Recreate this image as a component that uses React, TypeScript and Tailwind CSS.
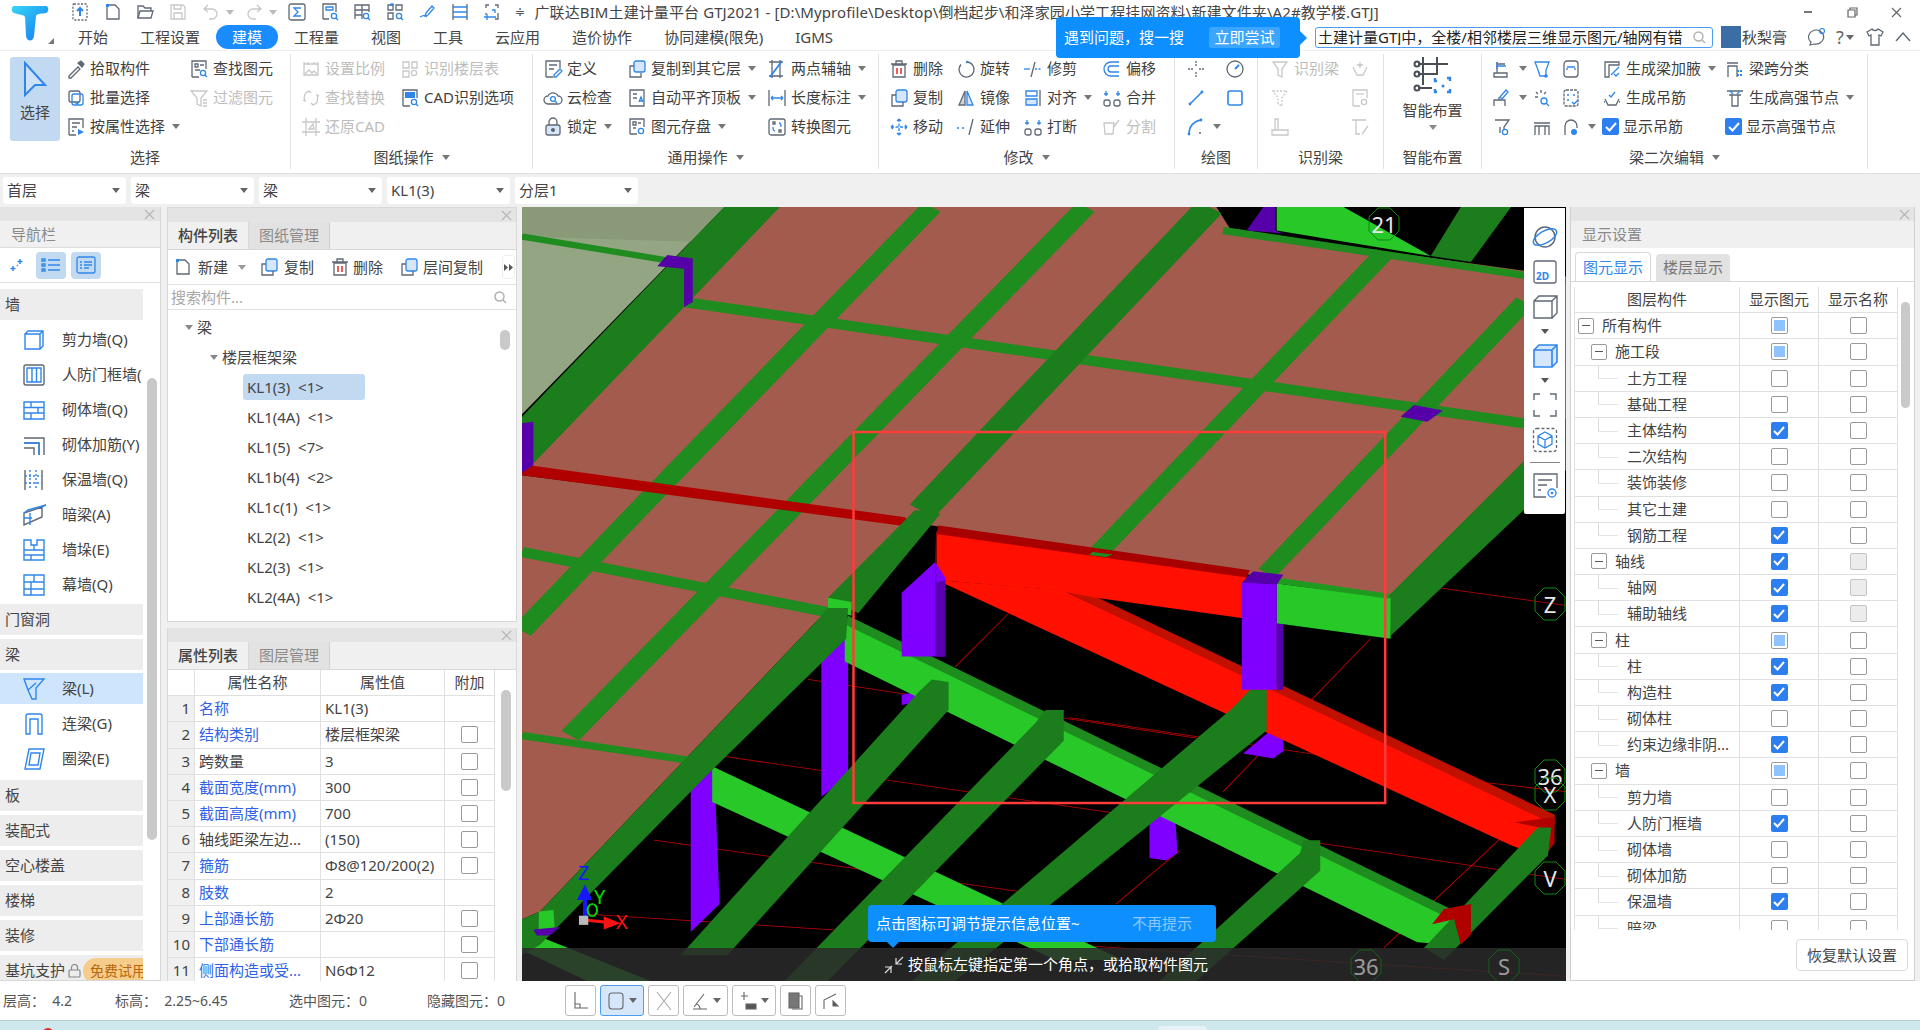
import React from "react";

const G = "#5f6875";
const B = "#2f86ea";
const L = "#c8c8c8";

const Ic = ({ s = 20, c = G, children }: { s?: number; c?: string; children: React.ReactNode }) => (
  <svg width={s} height={s} viewBox="0 0 20 20" fill="none" stroke={c} strokeWidth={1.3} className="shrink-0">
    {children}
  </svg>
);

const Caret = ({ c = "#777" }: { c?: string }) => (
  <svg width="8" height="5" viewBox="0 0 8 5" className="shrink-0">
    <path d="M0 0h8L4 5z" fill={c} />
  </svg>
);

const X = () => (
  <svg width="11" height="11" viewBox="0 0 11 11" stroke="#b5b5b5" strokeWidth="1.2">
    <path d="M1 1l9 9M10 1l-9 9" />
  </svg>
);

// ribbon and quick access icons
const icons: Record<string, React.ReactNode> = {
  upload: <><rect x="3" y="2" width="14" height="16" rx="1" strokeDasharray="2 1.5" /><path d="M10 14V6M7 9l3-3 3 3" stroke={B} strokeWidth="2" /></>,
  newfile: <><path d="M4 3h8l4 4v10H4z" /><path d="M3 2h3v3H3z" fill={B} stroke="none" /></>,
  folder: <><path d="M3 16V4h5l2 2h6v3" /><path d="M3 16l2-7h13l-2 7z" /></>,
  save: <><path d="M3 3h12l2 2v12H3z" /><path d="M6 3v4h7V3M6 17v-6h8v6" /></>,
  undo: <path d="M7 3L3 7l4 3M3 7h8a5 5 0 0 1 0 10H8" />,
  redo: <path d="M13 3l4 4-4 3M17 7H9a5 5 0 0 0 0 10h3" />,
  sigma: <><rect x="2" y="2" width="16" height="16" rx="2" /><path d="M14 6H7l4 4-4 4h7" stroke={B} /></>,
  docq: <><path d="M3 17V2h13v8M3 17h6" /><path d="M6 5h7v3H6z" stroke={B} /><circle cx="14" cy="14" r="2.6" stroke={B} /><path d="M16 16l2 2" stroke={B} /></>,
  gridq: <><path d="M3 17V3h14v7M3 8h14M3 13h7M10 3v14" /><circle cx="14" cy="14" r="2.6" stroke={B} /><path d="M16 16l2 2" stroke={B} /></>,
  gridq2: <><path d="M3 3h5v5H3zM11 3h6v5h-6zM3 11h5v6H3z" /><circle cx="14" cy="14" r="2.6" stroke={B} /><path d="M16 16l2 2M7 1v3M5 2.5h4" stroke={B} /></>,
  pen: <><path d="M3 15c3-2 5-2 7 0M9 11l6-7 2 2-6 7-3 1z" stroke={B} /></>,
  columns: <><path d="M3 2v16M17 2v16" /><path d="M3 5h14M3 10h14M3 15h14" stroke={B} /></>,
  plusdoc: <><path d="M4 6V3h3M13 3h3v3M16 11v6h-3M4 11v2" /><path d="M8 15h6M5 12v6M2 15h6" stroke={B} /><path d="M10 8h3v3" stroke={B} /></>,
  pick: <><path d="M3 17l9-9 2 2-9 9H3z" /><path d="M12 4l4 4 2-3-3-3z" fill={G} /></>,
  batch: <><rect x="3" y="3" width="11" height="11" rx="2" /><rect x="6" y="6" width="11" height="11" rx="2" stroke={B} /><path d="M9 14l2 2 3-3" stroke={B} /></>,
  attr: <><path d="M3 18V2h14v9M3 18h7M6 6h8M6 10h5M6 14h2" /><path d="M12 12l6 3-6 3z" fill={B} stroke="none" /></>,
  find: <><path d="M3 18V2h14v8M3 18h7" /><path d="M6 5h3v3H6zM11 6h4M6 11h5" /><circle cx="14" cy="14" r="2.6" stroke={B} /><path d="M16 16l2 2" stroke={B} /></>,
  filter: <><path d="M2 3h16l-6 7v8l-4-2v-6z" /><path d="M14 12h4M14 15h4M14 18h4" /></>,
  scale: <><path d="M3 5h14v11H3zM3 5V3M17 5V3M7 3v2M13 3v2" /><path d="M4 15l4-4 3 3 2-2 3 3" /></>,
  floor: <><path d="M3 3h6v6H3zM12 3h5v6h-5zM3 12h6v6H3z" /><circle cx="14" cy="14" r="2.6" /></>,
  replace: <path d="M8 3C4 4 2 8 4 13l-2-1M12 17c4-1 6-5 4-10l2 1M8 3l2 2M12 17l-2-2" />,
  cad: <><path d="M3 18V2h14v8M3 18h7" /><rect x="5" y="4" width="10" height="6" fill={B} stroke="none" /><circle cx="14" cy="14" r="2.6" stroke={B} /><path d="M16 16l2 2" stroke={B} /></>,
  restore: <path d="M5 1v18M15 1v18M1 5h18M1 15h18M8 12l4-5 1 5z" />,
  define: <><path d="M3 18V2h14v7M3 18h7M6 6h8M6 10h5" /><path d="M11 16l6-6 2 2-6 6h-2z" stroke={B} /></>,
  cloud: <><path d="M5 16a4 4 0 0 1 0-8 5.5 5.5 0 0 1 10 0 4 4 0 0 1 0 8z" /><circle cx="10" cy="11" r="2.4" stroke={B} /><path d="M12 13l2 2" stroke={B} /></>,
  lock: <><rect x="3" y="8" width="14" height="10" rx="2" fill="#d7e7fb" stroke={G} /><path d="M6 8V5a4 4 0 0 1 8 0v3" /><circle cx="10" cy="13" r="1.4" fill={G} /></>,
  copyto: <><rect x="7" y="2" width="11" height="11" rx="2" stroke={B} fill="#d7e7fb" /><path d="M7 7H3v11h11v-4" /></>,
  align: <><path d="M3 2h14v16H3zM6 6h4M6 10h4" /><path d="M12 14l2-5 2 5M13 13h2" stroke={B} /></>,
  store: <><path d="M3 17V2h14v8M3 17h7M6 5h3v3H6zM11 6h3M6 11h3" /><circle cx="14" cy="14" r="2.6" stroke={B} /></>,
  axis: <><path d="M2 3h14M2 17h14M5 1v18M13 1v18" /><path d="M3 18L15 2" stroke={B} strokeWidth="1.8" /></>,
  dim: <><path d="M2 2v16M18 2v16" /><path d="M4 10h12M4 10l2-2M4 10l2 2M16 10l-2-2M16 10l-2 2" stroke={B} /></>,
  convert: <><rect x="2" y="2" width="16" height="16" rx="2" /><path d="M6 5h2v2H6zM12 13h2v2h-2z" /><path d="M12 6c2 0 2 2 2 4M8 14c-2 0-2-2-2-4" stroke={B} /></>,
  del: <><path d="M4 6h12v12H4zM2 5h16M7 5V2h6v3" /><path d="M8 9v6M12 9v6" stroke="#e33" strokeWidth="1.6" /></>,
  copy: <><rect x="7" y="2" width="11" height="12" rx="2" fill="#d7e7fb" stroke={B} /><path d="M7 7H3v11h11v-4" /></>,
  move: <path d="M10 2v16M2 10h16M10 2L8 4M10 2l2 2M10 18l-2-2M10 18l2-2M2 10l2-2M2 10l2 2M18 10l-2-2M18 10l-2 2" stroke={B} strokeDasharray="3 1.5" />,
  rotate: <><path d="M11 3a7.5 7.5 0 1 1-6 2.5" /><circle cx="11" cy="3" r="1.2" fill={B} stroke="none" /></>,
  mirror: <><path d="M9 3L3 17h6z" fill="#cfd4da" /><path d="M11 3l6 14h-6z" fill="#d7e7fb" stroke={B} /></>,
  extend: <><path d="M1 11h3M6 11h3" strokeDasharray="2 1" stroke={B} /><path d="M17 2l-4 16" /></>,
  trim: <><path d="M1 10h6" stroke={B} /><path d="M12 3l-4 15" /><path d="M12 10h6" stroke={B} strokeDasharray="2 1.5" /></>,
  alignv: <><path d="M3 3h11v5H3z" stroke={B} /><path d="M3 11h11v6H3z" fill="#d7e7fb" stroke={B} /><path d="M17 2v16" /></>,
  offset: <path d="M17 3H9a7 7 0 0 0 0 14h8M17 7H9a3 3 0 0 0 0 6h8" stroke={B} />,
  merge: <><rect x="2" y="12" width="6" height="6" rx="2" /><rect x="12" y="12" width="6" height="6" rx="2" /><path d="M4 3v5M16 3v5M2 6h4M14 6h4" stroke={B} /></>,
  split: <><path d="M2 6h10l-1 11H3zM17 3l-6 8" /></>,
  cross: <path d="M10 2v5M10 13v5M2 10h5M13 10h5" strokeDasharray="2 1" />,
  gauge: <><circle cx="10" cy="10" r="8" /><path d="M10 10l4-4" stroke={B} strokeWidth="2" /></>,
  line: <><path d="M4 16L16 4" stroke={B} strokeWidth="1.6" /><circle cx="4" cy="16" r="1.4" fill={B} stroke="none" /><circle cx="16" cy="4" r="1.4" fill={B} stroke="none" /></>,
  square: <rect x="3" y="3" width="14" height="14" rx="2" stroke={B} strokeWidth="1.6" />,
  arc: <><path d="M3 17C3 9 8 4 15 3" stroke={B} strokeWidth="1.6" /><circle cx="3" cy="17" r="1.4" fill={B} stroke="none" /><circle cx="15" cy="3" r="1.4" fill={B} stroke="none" /><circle cx="14" cy="16" r="1" fill={G} stroke="none" /></>,
  funnel: <><path d="M3 3h14l-5 7v8l-4-2v-6z" /></>,
  funnel2: <><path d="M3 3h14l-5 7v8l-4-2v-6z" strokeDasharray="2 1.5" /></>,
  slab: <><path d="M5 2h3v11H5zM2 13h16v5H2z" /></>,
  hang: <><path d="M3 8l4 8h6l4-8M10 3v6M7 6h6" /></>,
  doc2: <><path d="M3 18V2h14v8M3 18h7" /><path d="M6 6h8" /><circle cx="14" cy="14" r="2.6" /></>,
  tt: <><path d="M2 3h14M6 3v14h4M12 17l6-8" /></>,
  beamL: <><path d="M2 14h13v4H2zM5 14V6M5 3v6M5 5h8" stroke={G} /><path d="M5 3v7M5 7h9" stroke={B} /></>,
  beamF: <><path d="M3 3h14l-3 8v6H8l-2-6z" stroke={B} /><circle cx="14" cy="17" r="1.8" fill={B} stroke="none" /></>,
  box2: <><rect x="3" y="2" width="14" height="16" rx="3" /><path d="M6 8h8M6 11V9M14 11V9" stroke={B} /></>,
  penBeam: <><path d="M2 18v-6h11v6M7 12V9" /><path d="M8 9l6-7 2 2-6 7z" stroke={B} /></>,
  sparkq: <><path d="M3 9h3M9 2v3M4 4l2 2M14 4l-2 2" stroke={G} /><circle cx="12" cy="13" r="3" stroke={B} /><path d="M14 15l3 3" stroke={B} /></>,
  dots: <><rect x="3" y="2" width="14" height="16" rx="2" strokeDasharray="3 1" /><circle cx="7" cy="7" r="1" fill={B} stroke="none" /><circle cx="13" cy="7" r="1" fill={B} stroke="none" /><circle cx="7" cy="12" r="1" fill={B} stroke="none" /><path d="M11 14l2 2 4-4" stroke={B} /></>,
  funq: <><path d="M3 3h14l-5 7v2M8 16v-6" /><circle cx="13" cy="15" r="2.6" stroke={B} /></>,
  span: <><path d="M2 6h16M3 18V9h14v9M7 9v9M13 9v9" /></>,
  arch: <><path d="M4 18V9a6 6 0 0 1 12 0v2" /><circle cx="13" cy="15" r="3" fill={B} stroke="none" /></>,
  haunch: <><path d="M3 18V3h14v3H7v12z" /><path d="M9 16l8-8" stroke={B} /><path d="M12 15l2 2 3-3" stroke={B} /></>,
  genhang: <><path d="M3 11l3 6h8l3-6" /><path d="M7 7l2 2 4-5" stroke={B} /><path d="M2 14h3M15 14h3" strokeDasharray="1 1" /></>,
  spanq: <><path d="M2 4h11M3 18V7h9v11" /><path d="M12 11h2v2h-2zM15 11h2v2h-2zM12 15h2v2h-2zM15 15h2v2h-2z" fill={B} stroke="none" /></>,
  node: <><path d="M2 3h16M4 7h12M7 7v11h6V7" /><path d="M5 3l3 3M15 3l-3 3" stroke={B} /></>,
};

const Icon = ({ n, c }: { n: string; c?: string }) => <Ic c={c}>{icons[n]}</Ic>;

type It = { icon?: string; t?: string; caret?: boolean; off?: boolean; checked?: boolean };

const Item = ({ icon, t, caret, off, checked }: It) => (
  <div className={`flex h-[29px] items-center ${off ? "text-[#bdbdbd]" : "text-[#3f3f3f]"}`}>
    {checked && <Check on />}
    {icon && <Icon n={icon} c={off ? L : undefined} />}
    {t && <span className="ml-[4px] whitespace-nowrap">{t}</span>}
    {caret && <span className="ml-[7px]"><Caret /></span>}
  </div>
);

const Col = ({ w, items }: { w: string; items: It[] }) => (
  <div className={`flex shrink-0 flex-col ${w}`}>
    {items.map((it, i) => (
      <Item key={i} {...it} />
    ))}
  </div>
);

const Group = ({ w, pl, label, caret, children }: { w: string; pl: string; label: string; caret?: boolean; children: React.ReactNode }) => (
  <div className={`mt-[3px] flex h-[115px] shrink-0 flex-col border-r border-[#e2e2e2] ${w}`}>
    <div className={`flex h-[87px] ${pl}`}>{children}</div>
    <div className="mt-[5px] flex h-[24px] items-center justify-center gap-[8px] text-[#444]">
      {label}
      {caret && <Caret />}
    </div>
  </div>
);

// the 3d model view, coordinates follow the picture of the model
const Scene = () => {
  const dark = "#1b7d1b";
  const mid = "#1e8c1e";
  const light = "#28c828";
  const purple = "#8000ff";
  const purpleD = "#5500a8";
  const reds = [
    [430, 930, 1010, 1045], [820, 1005, 1230, 1085], [300, 1080, 920, 1198], [920, 1198, 1562, 1322],
    [200, 1245, 780, 1352], [100, 1390, 1562, 1512], [1370, 750, 1562, 785], [730, 800, 650, 905],
    [1270, 850, 1050, 1150], [1490, 1210, 1290, 1456], [985, 1265, 890, 1370], [1290, 1110, 1562, 1150],
  ];
  const thin = [
    [615, 4, 210, 552, 32], [845, 4, 410, 590, 32], [1290, 95, 865, 680, 30], [1500, 190, 1115, 722, 30],
    [245, 190, 1562, 440, 20], [1050, 50, 1562, 150, 14], [210, 552, 3, 835, 32], [410, 590, 75, 1040, 32],
    [3, 680, 485, 805, 20], [3, 1040, 260, 1090, 14], [3, 62, 250, 115, 12],
  ];
  return (
    <svg viewBox="3 4 1559 1517" preserveAspectRatio="none" className="absolute inset-0 h-full w-full">
      <rect x="0" y="0" width="1568" height="1568" fill="#000" />
      {reds.map((l, i) => (
        <line key={i} x1={l[0]} y1={l[1]} x2={l[2]} y2={l[3]} stroke="#c80000" strokeWidth="1.5" />
      ))}
      <polygon points="450,880 490,830 490,1120 450,1160" fill={purple} />
      <polygon points="255,1140 290,1100 298,1370 255,1425" fill={purple} />
      <polygon points="570,960 590,955 590,975 570,980" fill={purple} />
      <polygon points="1130,950 1140,940 1140,1070 1125,1085 1080,1075 1130,1020" fill={purple} />
      <polygon points="940,1210 965,1180 965,1135 975,1135 982,1270 965,1285 940,1280" fill={purple} />
      <polygon points="942,1128 985,1120 975,1140 950,1135" fill={purpleD} />
      {/* red beam running down to the right */}
      <polygon points="622,735 810,755 1545,1210 1530,1280 1480,1255" fill="#ff1000" />
      <polygon points="810,755 860,768 1545,1195 1545,1215" fill="#c01000" />
      <polygon points="622,640 1085,725 1080,810 860,770 800,755 622,735" fill="#ff1000" />
      <polygon points="1485,1210 1545,1200 1545,1250 1530,1278 1530,1222" fill="#b00000" />
      {/* long light beams */}
      <polygon points="485,815 1390,1395 1390,1450 1340,1445 485,895" fill={light} />
      <polygon points="490,805 1390,1380 1390,1400 485,822" fill={mid} />
      <polygon points="287,1100 900,1480 800,1480 287,1170" fill={light} />
      <polygon points="3,1420 195,1521 100,1521 3,1460" fill={light} />
      {/* cross beams */}
      <polygon points="615,930 640,935 640,990 310,1470 240,1470 595,955" fill={dark} />
      <polygon points="785,990 812,990 812,1050 460,1521 395,1521 770,1015" fill={dark} />
      <polygon points="1090,950 1115,950 1115,1030 650,1521 585,1521 1065,985" fill={dark} />
      <polygon points="1170,1245 1195,1245 1195,1305 1010,1521 955,1521 1165,1270" fill={dark} />
      <polygon points="1520,1220 1540,1220 1535,1275 1380,1480 1350,1456" fill={dark} />
      <polygon points="1380,1380 1420,1370 1420,1430 1405,1450 1395,1400 1362,1410" fill="#b00000" />
      <polygon points="570,760 620,700 635,730 635,885 570,885" fill={purple} />
      <polygon points="620,640 622,740 635,735 635,885 620,885" fill="#5a00b0" />
      <polygon points="1130,730 1140,735 1140,950 1130,950" fill={purpleD} />
      {/* slabs */}
      <polygon points="3,4 305,4 3,410" fill="#93a583" />
      <polygon points="3,4 305,4 255,72 3,62" fill="#8a9a78" />
      <polygon points="385,4 1040,4 1062,50 1562,140 1562,420 1300,768 625,630 3,510" fill="#a25b4c" />
      <polygon points="3,530 575,625 470,780 440,820 30,1385 3,1400" fill="#a25b4c" />
      <polygon points="1130,50 1130,4 1230,4 1360,100" fill={light} />
      <polygon points="1405,4 1480,4 1420,112 1360,100" fill={dark} />
      <polygon points="305,4 388,4 245,200 3,530 3,415" fill={dark} />
      {thin.map((l, i) => (
        <line key={i} x1={l[0]} y1={l[1]} x2={l[2]} y2={l[3]} stroke={mid} strokeWidth={l[4]} />
      ))}
      <line x1="1030" y1="4" x2="600" y2="600" stroke={dark} strokeWidth="44" />
      <polygon points="3,508 575,612 590,632 3,530" fill="#b00000" />
      <polygon points="625,628 1090,716 1085,730 622,645" fill="#a80000" />
      <polygon points="855,680 885,685 875,690 850,686" fill={mid} />
      <polygon points="590,598 628,605 505,800 460,770" fill={dark} />
      <polygon points="460,770 495,778 495,805 460,792" fill={light} />
      <polygon points="460,790 490,790 487,850 285,1110 30,1450 3,1470 3,1400 30,1385 440,820" fill={dark} />
      <polygon points="1298,765 1562,420 1562,520 1300,845" fill={dark} />
      <polygon points="1130,742 1300,770 1300,850 1130,820" fill={light} />
      <polygon points="1130,730 1298,762 1298,772 1130,742" fill="#1f9a1f" />
      <polygon points="1078,740 1130,742 1130,950 1078,950" fill={purple} />
      <polygon points="1078,740 1095,718 1140,725 1130,744" fill={purpleD} />
      <polygon points="1315,415 1335,392 1378,403 1355,425" fill={purpleD} />
      <polygon points="205,120 220,98 258,105 258,190 245,200 245,125" fill={purpleD} />
      <polygon points="3,428 20,425 20,510 3,525" fill={purpleD} />
      <polygon points="1085,50 1110,4 1128,4 1128,50 1140,56" fill={purpleD} />
      {/* axis marks */}
      <polygon points="28,1385 50,1382 52,1420 28,1422" fill={light} />
      <polygon points="20,1420 60,1415 45,1432 25,1432" fill={purpleD} />
      <line x1="97" y1="1350" x2="97" y2="1395" stroke="#1717ff" strokeWidth="6" />
      <polygon points="85,1362 108,1362 97,1332" fill="#1717ff" />
      <ellipse cx="108" cy="1382" rx="7" ry="12" fill="none" stroke="#00e000" strokeWidth="3" />
      <line x1="100" y1="1402" x2="130" y2="1406" stroke="#f11" strokeWidth="6" />
      <polygon points="125,1394 150,1408 125,1420" fill="#f11" />
      <rect x="88" y="1393" width="14" height="18" fill="#bbb" />
      <rect x="498" y="445" width="794" height="727" fill="none" stroke="#ff3b3b" strokeWidth="2.5" vectorEffect="non-scaling-stroke" />
    </svg>
  );
};

const Tag = ({ pos, t, dim }: { pos: string; t: string; dim?: boolean }) => (
  <div className={`absolute flex h-[34px] w-[32px] items-center justify-center ${pos} ${dim ? "opacity-60" : ""}`}>
    <svg viewBox="0 0 32 34" className="absolute inset-0" fill="none" stroke="#0c8a0c" strokeWidth="1">
      <path d="M10 1h12l9 9v14l-9 9H10l-9-9V10z" />
    </svg>
    <span className="relative text-[22px] leading-none text-[#e8e8e8]">{t}</span>
  </div>
);

const Check = ({ on, part, off }: { on?: boolean; part?: boolean; off?: boolean }) => {
  if (on)
    return (
      <span className="flex h-[17px] w-[17px] shrink-0 items-center justify-center rounded-[2px] bg-[#2d7ff0]">
        <svg width="12" height="10" viewBox="0 0 12 10" fill="none" stroke="#fff" strokeWidth="2">
          <path d="M1 5l3.5 3.5L11 1" />
        </svg>
      </span>
    );
  if (part)
    return (
      <span className="flex h-[17px] w-[17px] shrink-0 items-center justify-center rounded-[2px] border border-[#9a9a9a] bg-white">
        <span className="h-[11px] w-[11px] bg-[#8fc3ff]" />
      </span>
    );
  return <span className={`h-[17px] w-[17px] shrink-0 rounded-[2px] border ${off ? "border-[#c4c4c4] bg-[#ececec]" : "border-[#9a9a9a] bg-white"}`} />;
};

const navIcons: Record<string, React.ReactNode> = {
  剪力墙: <><path d="M3 6h15v15H3zM3 6l3-3h15v15l-3 3M18 6l3-3" /></>,
  人防门框墙: <><rect x="2" y="2" width="20" height="20" rx="2" stroke={G} /><path d="M5 5h14v14H5zM10 5v14M14.500 5v14" /></>,
  砌体墙: <path d="M2 4h20v17H2zM2 9.500h20M2 15h20M9 4v5.500M16 9.500V15M9 15v6" />,
  砌体加筋: <><path d="M2 5h20v17M2 10h15v12M2 15h10v7" stroke={G} /><path d="M2 10h15v12" /></>,
  保温墙: <><path d="M3 2v20M20 2v20" stroke={G} /><path d="M8 2v20M14 2v20M3 8h17M3 15h17" strokeDasharray="2 2" /></>,
  暗梁: <><path d="M2 10l18-6v10L2 22z" stroke={G} /><path d="M2 10l4-3 18-5-4 2M2 15h8M8 10v12" /></>,
  墙垛: <path d="M2 2h7v5h6V2h7v20H2zM2 12h20M2 17h20M12 7v5M9 17v5" />,
  幕墙: <path d="M2 2h20v20H2zM2 9h20M2 16h20M12 2v7M9 9v13" />,
  梁: <path d="M2 2h20l-8 9v11h-4l-4-9zM6 13l8-7" />,
  连梁: <path d="M4 22V4a2 2 0 0 1 2-2h12a2 2 0 0 1 2 2v18h-4V7H8v15z" />,
  圈梁: <path d="M7 2h15l-4 20H3zM9 6h9l-2 12H7z" />,
};

const NavHead = ({ t, mt = "mt-[4px]", children }: { t: string; mt?: string; children?: React.ReactNode }) => (
  <div className={`${mt} flex h-[31px] w-[143px] shrink-0 items-center overflow-hidden bg-[#ededed] pl-[5px] text-[#444]`}>
    <span className="shrink-0 whitespace-nowrap">{t}</span>
    {children}
  </div>
);

const NavRow = ({ k, t, on }: { k: string; t: string; on?: boolean }) => (
  <div className="flex h-[35px] w-[143px] shrink-0 items-center">
    <div className={`flex h-[31px] w-full items-center overflow-hidden pl-[22px] ${on ? "bg-[#cfe5fd]" : ""}`}>
      <svg width="24" height="24" viewBox="0 0 24 24" fill="none" stroke={B} strokeWidth="1.4" className="shrink-0">
        {navIcons[k]}
      </svg>
      <span className="ml-[16px] whitespace-nowrap text-[#444]">{t}</span>
    </div>
  </div>
);

const Nav = () => (
  <div className="relative flex h-full w-[161px] shrink-0 flex-col overflow-hidden border-r border-b border-[#d8d8d8] bg-white">
    <div className="flex h-[14px] shrink-0 items-center justify-end bg-[#e4e4e4] pr-[5px]"><X /></div>
    <div className="flex h-[27px] shrink-0 items-center border-b border-[#dcdcdc] bg-[#f0f0f0] pl-[11px] text-[#8a8a8a]">导航栏</div>
    <div className="flex h-[35px] shrink-0 items-center gap-[5px] border-b border-[#e2e2e2] pl-[9px]">
      <svg width="16" height="16" viewBox="0 0 16 16" fill="none" stroke={B} strokeWidth="1.4" className="mr-[6px] shrink-0">
        <path d="M11 2v5M8.500 4.500h5M4 9v5M1.500 11.500h5M9 8l-1 1" />
      </svg>
      <div className="flex h-[27px] w-[30px] items-center justify-center rounded-[4px] bg-[#c2d9f2]">
        <svg width="20" height="16" viewBox="0 0 20 16" fill="none" stroke={B} strokeWidth="1.3">
          <path d="M1 2h3v2H1zM1 7h3v2H1zM1 12h3v2H1zM7 3h12M7 8h12M7 13h12" />
        </svg>
      </div>
      <div className="flex h-[27px] w-[30px] items-center justify-center rounded-[4px] bg-[#c2d9f2]">
        <svg width="20" height="18" viewBox="0 0 20 18" fill="none" stroke={B} strokeWidth="1.3">
          <rect x="1" y="1" width="18" height="16" rx="2" />
          <path d="M4 6h2M8 6h8M4 9h2M8 9h8M4 12h2M8 12h5" />
        </svg>
      </div>
    </div>
    <div className="flex flex-col">
      <div className="h-[2px]" />
      <NavHead t="墙" />
      <div className="h-[2px]" />
      <NavRow k="剪力墙" t="剪力墙(Q)" />
      <NavRow k="人防门框墙" t="人防门框墙(" />
      <NavRow k="砌体墙" t="砌体墙(Q)" />
      <NavRow k="砌体加筋" t="砌体加筋(Y)" />
      <NavRow k="保温墙" t="保温墙(Q)" />
      <NavRow k="暗梁" t="暗梁(A)" />
      <NavRow k="墙垛" t="墙垛(E)" />
      <NavRow k="幕墙" t="幕墙(Q)" />
      <NavHead t="门窗洞" mt="mt-[2px]" />
      <NavHead t="梁" />
      <div className="h-[1px]" />
      <NavRow k="梁" t="梁(L)" on />
      <NavRow k="连梁" t="连梁(G)" />
      <NavRow k="圈梁" t="圈梁(E)" />
      <NavHead t="板" />
      <NavHead t="装配式" />
      <NavHead t="空心楼盖" />
      <NavHead t="楼梯" />
      <NavHead t="装修" />
      <NavHead t="基坑支护">
        <svg width="13" height="14" viewBox="0 0 13 14" fill="none" stroke="#888" strokeWidth="1.2" className="ml-[3px] shrink-0">
          <rect x="1" y="6" width="11" height="7" rx="1" />
          <path d="M3.500 6V3.500a3 3 0 0 1 6 0V6" />
        </svg>
        <span className="ml-[2px] flex h-[26px] shrink-0 items-center whitespace-nowrap rounded-l-full bg-[#f6cc8a] pl-[7px] pr-[4px] text-[14px] text-[#b4670f]">免费试用</span>
      </NavHead>
    </div>
    <div className="absolute left-[147px] top-[171px] h-[462px] w-[10px] rounded-full bg-[#c9c9c9]" />
  </div>
);

const PanelTabs = ({ a, b }: { a: string; b: string }) => (
  <>
    <div className="flex h-[14px] shrink-0 items-center justify-end bg-[#e4e4e4] pr-[4px]"><X /></div>
    <div className="flex h-[28px] shrink-0 border-b border-[#d8d8d8] bg-[#f0f0f0]">
      <div className="flex w-[81px] items-center justify-center border-r border-[#d8d8d8] font-medium text-[#444]">{a}</div>
      <div className="flex w-[81px] items-center justify-center border-r border-[#d0d0d0] bg-[#e2e2e2] text-[#8a8a8a]">{b}</div>
    </div>
  </>
);

const kl = ["KL1(3)  <1>", "KL1(4A)  <1>", "KL1(5)  <7>", "KL1b(4)  <2>", "KL1c(1)  <1>", "KL2(2)  <1>", "KL2(3)  <1>", "KL2(4A)  <1>"];

const ListPanel = () => (
  <div className="flex h-[415px] shrink-0 flex-col overflow-hidden border border-[#d8d8d8] bg-white">
    <PanelTabs a="构件列表" b="图纸管理" />
    <div className="flex h-[35px] shrink-0 items-center border-b border-[#e2e2e2] pl-[5px] text-[#444]">
      <Icon n="newfile" />
      <span className="ml-[5px]">新建</span>
      <span className="ml-[10px] mr-[13px]"><Caret c="#999" /></span>
      <Icon n="copy" />
      <span className="ml-[5px]">复制</span>
      <span className="ml-[16px]"><Icon n="del" /></span>
      <span className="ml-[3px]">删除</span>
      <span className="ml-[16px]"><Icon n="copy" /></span>
      <span className="ml-[4px]">层间复制</span>
      <span className="ml-[19px] flex h-[24px] w-[13px] items-center justify-center rounded-[3px] border border-[#eee]">
        <svg width="9" height="7" viewBox="0 0 9 7" fill="#555"><path d="M0 0l4 3.500L0 7zM5 0l4 3.500L5 7z" /></svg>
      </span>
    </div>
    <div className="flex h-[25px] shrink-0 items-center justify-between border-b border-[#e2e2e2] pl-[3px] pr-[9px] text-[#a8a8a8]">
      搜索构件...
      <svg width="13" height="13" viewBox="0 0 13 13" fill="none" stroke="#b0b0b0" strokeWidth="1.5">
        <circle cx="5.500" cy="5.500" r="4.500" />
        <path d="M9 9l3 3" />
      </svg>
    </div>
    <div className="relative flex-1 pt-[2px] text-[#444]">
      <div className="flex h-[30px] items-center pl-[17px]"><Caret c="#888" /><span className="ml-[4px]">梁</span></div>
      <div className="flex h-[30px] items-center pl-[42px]"><Caret c="#888" /><span className="ml-[4px]">楼层框架梁</span></div>
      {kl.map((k, i) => (
        <div key={k} className="flex h-[30px] items-center pl-[75px]">
          <span className={`flex h-[26px] items-center whitespace-pre rounded-[3px] pl-[4px] ${i === 0 ? "w-[122px] bg-[#c2d9f2]" : ""}`}>{k}</span>
        </div>
      ))}
      <div className="absolute left-[332px] top-[20px] h-[20px] w-[10px] rounded-full bg-[#c9c9c9]" />
    </div>
  </div>
);

const props = [
  ["名称", "KL1(3)", 1, 0],
  ["结构类别", "楼层框架梁", 1, 1],
  ["跨数量", "3", 0, 1],
  ["截面宽度(mm)", "300", 1, 1],
  ["截面高度(mm)", "700", 1, 1],
  ["轴线距梁左边...", "(150)", 0, 1],
  ["箍筋", "Φ8@120/200(2)", 1, 1],
  ["肢数", "2", 1, 0],
  ["上部通长筋", "2Φ20", 1, 1],
  ["下部通长筋", "", 1, 1],
  ["侧面构造或受...", "N6Φ12", 1, 1],
] as const;

const cell = "flex items-center border-b border-r border-[#e0e0e0]";

const PropPanel = () => (
  <div className="relative flex min-h-0 flex-1 flex-col overflow-hidden border-x border-[#d8d8d8] bg-white">
    <PanelTabs a="属性列表" b="图层管理" />
    <div className="grid grid-cols-[27px_126px_124px_50px] auto-rows-[26.2px] text-[#444]">
      <div className={cell} />
      <div className={`${cell} justify-center`}>属性名称</div>
      <div className={`${cell} justify-center`}>属性值</div>
      <div className={`${cell} justify-center`}>附加</div>
      {props.map((p, i) => (
        <React.Fragment key={i}>
          <div className={`${cell} justify-end bg-[#f0f0f0] pr-[4px]`}>{i + 1}</div>
          <div className={`${cell} whitespace-nowrap pl-[4px] ${p[2] ? "text-[#2f62e8]" : ""}`}>{p[0]}</div>
          <div className={`${cell} whitespace-nowrap pl-[4px] text-[#444]`}>{p[1]}</div>
          <div className={`${cell} justify-center`}>{p[3] ? <Check /> : null}</div>
        </React.Fragment>
      ))}
    </div>
    <div className="absolute left-[333px] top-[62px] h-[101px] w-[10px] rounded-full bg-[#c9c9c9]" />
  </div>
);

const layers: [string, number, number, number][] = [
  ["所有构件", 0, 2, 0], ["施工段", 1, 2, 0], ["土方工程", 2, 0, 0], ["基础工程", 2, 0, 0], ["主体结构", 2, 1, 0],
  ["二次结构", 2, 0, 0], ["装饰装修", 2, 0, 0], ["其它土建", 2, 0, 0], ["钢筋工程", 2, 1, 0], ["轴线", 1, 1, 3],
  ["轴网", 2, 1, 3], ["辅助轴线", 2, 1, 3], ["柱", 1, 2, 0], ["柱", 2, 1, 0], ["构造柱", 2, 1, 0], ["砌体柱", 2, 0, 0],
  ["约束边缘非阴...", 2, 1, 0], ["墙", 1, 2, 0], ["剪力墙", 2, 0, 0], ["人防门框墙", 2, 1, 0], ["砌体墙", 2, 0, 0],
  ["砌体加筋", 2, 0, 0], ["保温墙", 2, 1, 0], ["暗梁", 2, 0, 0],
];

const Minus = () => (
  <span className="flex h-[16px] w-[16px] shrink-0 items-center justify-center rounded-[2px] border border-[#999] bg-white">
    <span className="h-px w-[8px] bg-[#555]" />
  </span>
);

const Box = ({ v }: { v: number }) => (v === 1 ? <Check on /> : v === 2 ? <Check part /> : v === 3 ? <Check off /> : <Check />);

const Settings = () => (
  <div className="relative flex h-full w-[345px] shrink-0 flex-col overflow-hidden border-x border-b border-[#d0d0d0] bg-white">
    <div className="flex h-[14px] shrink-0 items-center justify-end bg-[#e4e4e4] pr-[4px]"><X /></div>
    <div className="flex h-[27px] shrink-0 items-center bg-[#f0f0f0] pl-[11px] text-[#8a8a8a]">显示设置</div>
    <div className="flex h-[34px] shrink-0 items-end gap-[5px] border-b border-[#d8d8d8] pl-[4px]">
      <div className="flex h-[29px] w-[76px] items-center justify-center rounded-t-[4px] border border-b-0 border-[#d8d8d8] text-[#2f8ae8]">图元显示</div>
      <div className="flex h-[27px] w-[74px] items-center justify-center rounded-t-[4px] bg-[#e2e2e2] text-[#777]">楼层显示</div>
    </div>
    <div className="ml-[3px] mt-[5px] h-[643px] w-[341px] shrink-0 overflow-hidden border-x border-[#e0e0e0]">
      <div className="grid w-[323px] grid-cols-[165px_79px_79px] auto-rows-[26.2px] text-[#444]">
        <div className={`${cell} justify-center`}>图层构件</div>
        <div className={`${cell} justify-center`}>显示图元</div>
        <div className={`${cell} justify-center`}>显示名称</div>
        {layers.map(([t, d, show, name], i) => (
          <React.Fragment key={i}>
            <div className={`${cell} relative whitespace-nowrap ${d === 0 ? "pl-[3px]" : d === 1 ? "pl-[16px]" : "pl-[52px]"}`}>
              {d === 2 && <span className="absolute left-[23px] top-1/2 h-px w-[20px] bg-[#e4e4e4]" />}
              {d === 2 && <span className="absolute left-[23px] top-0 h-1/2 w-px bg-[#dcdcdc]" />}
              {d < 2 && <Minus />}
              <span className={d < 2 ? "ml-[8px]" : ""}>{t}</span>
            </div>
            <div className={`${cell} justify-center`}><Box v={show} /></div>
            <div className={`${cell} justify-center`}><Box v={name} /></div>
          </React.Fragment>
        ))}
      </div>
    </div>
    <div className="absolute left-[330px] top-[95px] h-[106px] w-[9px] rounded-full bg-[#c9c9c9]" />
    <div className="mr-[6px] mt-[9px] flex h-[32px] w-[112px] items-center justify-center self-end rounded-[4px] border border-[#dcdcdc] text-[#444]">恢复默认设置</div>
  </div>
);

const ViewTool = ({ children }: { children: React.ReactNode }) => <div className="flex items-center justify-center">{children}</div>;

const View = () => (
  <div className="relative h-full w-[1044px] shrink-0 overflow-hidden bg-black">
    <Scene />
    <Tag pos="left-[846px] top-[0px]" t="21" />
    <Tag pos="left-[1012px] top-[380px]" t="Z" />
    <Tag pos="left-[1012px] top-[552px]" t="36" />
    <Tag pos="left-[1012px] top-[570px]" t="X" />
    <Tag pos="left-[1012px] top-[654px]" t="V" />
    <span className="absolute left-[56px] top-[656px] text-[20px] leading-none text-[#1717ff]">Z</span>
    <span className="absolute left-[72px] top-[680px] text-[20px] leading-none text-[#00e000]">Y</span>
    <span className="absolute left-[94px] top-[705px] text-[20px] leading-none text-[#f11]">X</span>
    {/* view tools */}
    <div className="absolute right-[1px] top-[1px] flex h-[306px] w-[41px] flex-col items-center gap-[9px] rounded-b-[2px] bg-white pt-[16px]">
      <ViewTool>
        <svg width="28" height="26" viewBox="0 0 28 26" fill="none" stroke={B} strokeWidth="1.5">
          <circle cx="14" cy="13" r="10" stroke={G} />
          <ellipse cx="14" cy="13" rx="13" ry="6" transform="rotate(-30 14 13)" />
        </svg>
      </ViewTool>
      <ViewTool>
        <svg width="26" height="26" viewBox="0 0 26 26" fill="none" stroke={G} strokeWidth="1.3">
          <rect x="2" y="2" width="22" height="22" rx="2" />
          <text x="4" y="21" fontSize="10" fill={B} stroke="none" fontWeight="700">2D</text>
        </svg>
      </ViewTool>
      <ViewTool>
        <svg width="26" height="26" viewBox="0 0 26 26" fill="none" stroke={G} strokeWidth="1.4">
          <path d="M2 7h18v17H2zM2 7l5-5h18v17l-5 5M20 7l5-5" />
        </svg>
      </ViewTool>
      <Caret c="#555" />
      <ViewTool>
        <svg width="26" height="26" viewBox="0 0 26 26" fill="#d7e7fb" stroke={B} strokeWidth="1.6">
          <path d="M2 7h18v17H2zM2 7l5-5h18v17l-5 5M20 7l5-5" />
        </svg>
      </ViewTool>
      <Caret c="#555" />
      <ViewTool>
        <svg width="26" height="26" viewBox="0 0 26 26" fill="none" stroke={G} strokeWidth="1.4">
          <path d="M2 8V2h6M18 2h6v6M24 18v6h-6M8 24H2v-6" />
        </svg>
      </ViewTool>
      <ViewTool>
        <svg width="26" height="26" viewBox="0 0 26 26" fill="none" stroke={G} strokeWidth="1.3">
          <rect x="1.500" y="1.500" width="23" height="23" rx="3" strokeDasharray="3 2" />
          <path d="M13 5l7 4v8l-7 4-7-4V9zM6 9l7 4 7-4M13 13v8" stroke={B} />
        </svg>
      </ViewTool>
      <div className="h-px w-[30px] bg-[#888]" />
      <ViewTool>
        <svg width="26" height="26" viewBox="0 0 26 26" fill="none" stroke={G} strokeWidth="1.3">
          <path d="M14 25H2V2h23v14M6 8h14M6 13h9M6 18h3" />
          <circle cx="20" cy="21" r="4" stroke={B} />
          <circle cx="20" cy="21" r="1.300" fill={B} stroke="none" />
        </svg>
      </ViewTool>
    </div>
    {/* prompt bar */}
    <div className="absolute inset-x-0 bottom-0 flex h-[33px] items-center bg-[#2a2a2a]/85 pl-[361px] text-white">
      <svg width="22" height="20" viewBox="0 0 22 20" fill="none" stroke="#ddd" strokeWidth="1.2" className="mr-[3px] shrink-0">
        <path d="M20 2l-7 7M13 3v6h6M2 18l7-7M8 18v-6H2" />
      </svg>
      按鼠标左键指定第一个角点，或拾取构件图元
    </div>
    <div className="absolute bottom-[39px] left-[346px] flex h-[37px] w-[348px] items-center justify-between rounded-[4px] bg-[#0d8fff] pl-[8px] pr-[24px] text-white">
      点击图标可调节提示信息位置~
      <span className="text-[#8cc8ff]">不再提示</span>
      <span className="absolute -bottom-[6px] left-[19px] h-0 w-0 border-x-[6px] border-t-[6px] border-x-transparent border-t-[#0d8fff]" />
    </div>
    <Tag pos="left-[828px] top-[742px]" t="36" dim />
    <Tag pos="left-[966px] top-[742px]" t="S" dim />
  </div>
);

const Top = () => (
  <div className="relative flex h-[51px] shrink-0 border-b border-[#eee] bg-white">
    <div className="relative w-[62px] shrink-0">
      <svg width="38" height="37" viewBox="0 0 38 37" className="absolute left-[11px] top-[4px]">
        <defs>
          <linearGradient id="lg" x1="0" y1="0" x2="1" y2="1">
            <stop offset="0" stopColor="#35d6f5" />
            <stop offset="1" stopColor="#1476f2" />
          </linearGradient>
        </defs>
        <path d="M3 2h32c3 0 3 6 0 7-4 1-9 0-10 3l-2 20c-1 6-7 6-8 0l-1-19c-1-3-7-2-11-4C0 8 0 2 3 2z" fill="url(#lg)" />
      </svg>
      <svg width="6" height="6" viewBox="0 0 6 6" className="absolute left-[48px] top-[38px]"><path d="M6 0v6H0z" fill="#777" /></svg>
    </div>
    <div className="flex min-w-0 flex-1 flex-col">
      <div className="flex h-[25px] items-center">
        <div className="ml-[2px] flex items-center">
          {["upload", "newfile", "folder", "save", "undo", "redo", "sigma", "docq", "gridq", "gridq2", "pen", "columns", "plusdoc"].map((n) => (
            <span key={n} className={`relative flex shrink-0 items-center justify-center ${n === "undo" || n === "redo" ? "w-[43.500px] pr-[10px]" : "w-[32.500px]"}`}>
              <Ic c={n === "save" || n === "undo" || n === "redo" ? L : G}>{icons[n]}</Ic>
              {(n === "undo" || n === "redo") && <span className="absolute right-[4px] top-[8px]"><Caret c="#bbb" /></span>}
            </span>
          ))}
        </div>
        <span className="ml-[6px] text-[12px] leading-none text-[#555]">≑</span>
        <span className="ml-[10px] whitespace-nowrap tracking-[0.1px] text-[#444]">广联达BIM土建计量平台 GTJ2021 - [D:\Myprofile\Desktop\倒档起步\和泽家园小学工程挂网资料\新建文件夹\A2#教学楼.GTJ]</span>
        <div className="ml-auto flex items-center">
          <span className="h-[2px] w-[8px] bg-[#777]" />
          <svg width="11" height="11" viewBox="0 0 11 11" fill="none" stroke="#666" strokeWidth="1.2" className="ml-[35px]">
            <path d="M3 3V1h7v7H8M1 3h7v7H1z" />
          </svg>
          <svg width="11" height="11" viewBox="0 0 11 11" fill="none" stroke="#666" strokeWidth="1.2" className="ml-[33px] mr-[18px]">
            <path d="M1 1l9 9M10 1l-9 9" />
          </svg>
        </div>
      </div>
      <div className="flex h-[26px] items-center text-[#444]">
        <div className="ml-[16px] flex items-center gap-[32px] whitespace-nowrap">
          <span>开始</span>
          <span>工程设置</span>
          <span className="-mx-[16px] flex h-[24px] items-center rounded-full bg-[#1a8cff] px-[16px] text-white">建模</span>
          <span>工程量</span>
          <span>视图</span>
          <span>工具</span>
          <span>云应用</span>
          <span>造价协作</span>
          <span>协同建模(限免)</span>
          <span>IGMS</span>
        </div>
        <div className="ml-auto flex w-[605px] shrink-0 items-center">
          <div className="flex h-[21px] w-[398px] shrink-0 items-center justify-between rounded-[3px] border border-[#4a9df0] pl-[2px] pr-[6px] text-[#222]">
            <span className="overflow-hidden whitespace-nowrap">土建计量GTJ中，全楼/相邻楼层三维显示图元/轴网有错</span>
            <svg width="13" height="13" viewBox="0 0 13 13" fill="none" stroke="#b0b0b0" strokeWidth="1.4" className="shrink-0">
              <circle cx="5.500" cy="5.500" r="4.500" />
              <path d="M9 9l3 3" />
            </svg>
          </div>
          <span className="ml-[8px] h-[22px] w-[20px] shrink-0 bg-[#3a6ea5]" />
          <span className="ml-[1px] whitespace-nowrap">秋梨膏</span>
          <svg width="20" height="20" viewBox="0 0 20 20" fill="none" stroke={G} strokeWidth="1.2" className="ml-[20px] shrink-0">
            <path d="M10 3a8 7 0 0 0-6 12l-1 3 4-1a8 7 0 1 0 3-14z" />
            <circle cx="15" cy="4" r="2.500" stroke={B} />
            <path d="M7 10h.01M10 10h.01M13 10h.01" strokeWidth="2" />
          </svg>
          <span className="ml-[9px] text-[18px] leading-none text-[#666]">?</span>
          <span className="ml-[2px]"><Caret c="#666" /></span>
          <svg width="20" height="20" viewBox="0 0 20 20" fill="none" stroke={G} strokeWidth="1.3" className="ml-[11px] shrink-0">
            <path d="M7 2L2 5l2 4 2-1v10h8V8l2 1 2-4-5-3c-1 2-5 2-6 0z" />
          </svg>
          <svg width="16" height="10" viewBox="0 0 16 10" fill="none" stroke={G} strokeWidth="1.4" className="ml-[10px] shrink-0">
            <path d="M1 9l7-8 7 8" />
          </svg>
        </div>
      </div>
    </div>
    {/* search hint over the title */}
    <div className="absolute left-[1056px] top-[17px] flex h-[41px] w-[244px] items-center rounded-[4px] bg-[#0d8fff] pl-[8px] text-white">
      遇到问题，搜一搜
      <span className="ml-[25px] flex h-[21px] w-[71px] items-center justify-center rounded-[2px] bg-[#3ca5ff]">立即尝试</span>
      <span className="absolute -right-[7px] top-[14px] h-0 w-0 border-y-[7px] border-l-[7px] border-y-transparent border-l-[#0d8fff]" />
    </div>
  </div>
);

const Ribbon = () => (
  <div className="flex h-[122px] shrink-0 bg-white">
    <Group w="w-[291px]" pl="pl-[10px]" label="选择">
      <div className="mt-[3px] flex h-[84px] w-[50px] shrink-0 flex-col items-center rounded-[3px] bg-[#c2d9f2] pt-[4px] text-[#444]">
        <svg width="26" height="36" viewBox="0 0 26 36" fill="#cfe2f7" stroke={B} strokeWidth="2">
          <path d="M3 2l20 22-10 0-10 10z" />
        </svg>
        <span className="mt-[8px]">选择</span>
      </div>
      <div className="w-[6px] shrink-0" />
      <Col w="w-[123px]" items={[{ icon: "pick", t: "拾取构件" }, { icon: "batch", t: "批量选择" }, { icon: "attr", t: "按属性选择", caret: true }]} />
      <Col w="w-[90px]" items={[{ icon: "find", t: "查找图元" }, { icon: "filter", t: "过滤图元", off: true }]} />
    </Group>
    <Group w="w-[242px]" pl="pl-[10px]" label="图纸操作" caret>
      <Col w="w-[99px]" items={[{ icon: "scale", t: "设置比例", off: true }, { icon: "replace", t: "查找替换", off: true }, { icon: "restore", t: "还原CAD", off: true }]} />
      <Col w="w-[120px]" items={[{ icon: "floor", t: "识别楼层表", off: true }, { icon: "cad", t: "CAD识别选项" }]} />
    </Group>
    <Group w="w-[346px]" pl="pl-[10px]" label="通用操作" caret>
      <Col w="w-[84px]" items={[{ icon: "define", t: "定义" }, { icon: "cloud", t: "云检查" }, { icon: "lock", t: "锁定", caret: true }]} />
      <Col w="w-[140px]" items={[{ icon: "copyto", t: "复制到其它层", caret: true }, { icon: "align", t: "自动平齐顶板", caret: true }, { icon: "store", t: "图元存盘", caret: true }]} />
      <Col w="w-[100px]" items={[{ icon: "axis", t: "两点辅轴", caret: true }, { icon: "dim", t: "长度标注", caret: true }, { icon: "convert", t: "转换图元" }]} />
    </Group>
    <Group w="w-[296px]" pl="pl-[10px]" label="修改" caret>
      <Col w="w-[67px]" items={[{ icon: "del", t: "删除" }, { icon: "copy", t: "复制" }, { icon: "move", t: "移动" }]} />
      <Col w="w-[67px]" items={[{ icon: "rotate", t: "旋转" }, { icon: "mirror", t: "镜像" }, { icon: "extend", t: "延伸" }]} />
      <Col w="w-[79px]" items={[{ icon: "trim", t: "修剪" }, { icon: "alignv", t: "对齐", caret: true }, { icon: "merge", t: "打断" }]} />
      <Col w="w-[60px]" items={[{ icon: "offset", t: "偏移" }, { icon: "merge", t: "合并" }, { icon: "split", t: "分割", off: true }]} />
    </Group>
    <Group w="w-[83px]" pl="pl-[11px]" label="绘图">
      <Col w="w-[39px]" items={[{ icon: "cross" }, { icon: "line" }, { icon: "arc", caret: true }]} />
      <Col w="w-[24px]" items={[{ icon: "gauge" }, { icon: "square" }]} />
    </Group>
    <Group w="w-[126px]" pl="pl-[12px]" label="识别梁">
      <Col w="w-[80px]" items={[{ icon: "funnel", t: "识别梁", off: true }, { icon: "funnel2", off: true }, { icon: "slab", off: true }]} />
      <Col w="w-[24px]" items={[{ icon: "hang", off: true }, { icon: "doc2", off: true }, { icon: "tt", off: true }]} />
    </Group>
    <Group w="w-[98px]" pl="pl-[0px]" label="智能布置">
      <div className="flex w-full flex-col items-center text-[#444]">
        <svg width="40" height="42" viewBox="0 0 40 42" fill="none" stroke="#4a4f57" strokeWidth="2" className="mt-[2px]">
          <path d="M10 1v28M24 1v16M5 8h30M5 18h20M5 32h14" />
          <circle cx="4" cy="8" r="2.500" />
          <circle cx="4" cy="18" r="2.500" />
          <circle cx="4" cy="32" r="2.500" />
          <path d="M24 25h-2v-3M34 22h3v3M37 33v3h-3M24 36h-2v-3" stroke={B} strokeWidth="2.400" />
          <circle cx="30" cy="30" r="1.500" fill={B} stroke="none" />
        </svg>
        <span className="mt-[5px] whitespace-nowrap">智能布置</span>
        <span className="mt-[7px]"><Caret c="#888" /></span>
      </div>
    </Group>
    <Group w="w-[386px]" pl="pl-[10px]" label="梁二次编辑" caret>
      <Col w="w-[40px]" items={[{ icon: "beamL", caret: true }, { icon: "penBeam", caret: true }, { icon: "funq" }]} />
      <Col w="w-[29px]" items={[{ icon: "beamF" }, { icon: "sparkq" }, { icon: "span" }]} />
      <Col w="w-[41px]" items={[{ icon: "box2" }, { icon: "dots" }, { icon: "arch", caret: true }]} />
      <Col w="w-[123px]" items={[{ icon: "haunch", t: "生成梁加腋", caret: true }, { icon: "genhang", t: "生成吊筋" }, { checked: true, t: "显示吊筋" }]} />
      <Col w="w-[130px]" items={[{ icon: "spanq", t: "梁跨分类" }, { icon: "node", t: "生成高强节点", caret: true }, { checked: true, t: "显示高强节点" }]} />
    </Group>
  </div>
);

const Combo = ({ t }: { t: string }) => (
  <div className="flex h-[27px] w-[123px] items-center justify-between rounded-[3px] bg-white pl-[4px] pr-[6px] text-[#444]">
    {t}
    <Caret c="#666" />
  </div>
);

const tools = ["w-[31px]", "w-[44px]", "w-[31px]", "w-[45px]", "w-[44px]", "w-[31px]", "w-[31px]"];

const Status = () => (
  <div className="flex h-[39px] shrink-0 items-center bg-white text-[14px] text-[#555]">
    <span className="ml-[3px] w-[112px] whitespace-pre">层高：  4.2</span>
    <span className="w-[174px] whitespace-pre">标高：  2.25~6.45</span>
    <span className="w-[138px] whitespace-pre">选中图元：0</span>
    <span className="w-[138px] whitespace-pre">隐藏图元：0</span>
    <div className="flex items-center gap-[4px]">
      {tools.map((w, i) => (
        <div key={i} className={`flex h-[31px] ${w} items-center justify-center gap-[4px] rounded-[3px] border ${i === 1 ? "border-[#4a9df0] bg-[#d7e7fb]" : "border-[#bdbdbd] bg-white"}`}>
          <svg width="18" height="20" viewBox="0 0 18 20" fill="none" stroke="#666" strokeWidth="1.1">
            {i === 0 && <path d="M3 1v16h13M3 13h5v4" />}
            {i === 1 && <rect x="2" y="2" width="14" height="16" rx="3" />}
            {i === 2 && <path d="M2 1l14 18M16 1L2 19" stroke="#aaa" />}
            {i === 3 && <path d="M2 18h14M3 16L13 3M9 18c0-3-2-5-4-5" />}
            {i === 4 && <><path d="M2 5h7M5 1v8" /><rect x="7" y="13" width="10" height="5" fill="#555" /></>}
            {i === 5 && <><rect x="2" y="2" width="10" height="15" fill="#777" /><path d="M12 5h3v13H5" /></>}
            {i === 6 && <><path d="M2 18V9L14 3" /><path d="M11 10l5 5h-5z" fill="#555" /></>}
          </svg>
          {(i === 1 || i === 3 || i === 4) && <Caret c="#666" />}
        </div>
      ))}
    </div>
  </div>
);

export default function App() {
  return (
    <div className="flex h-[1030px] w-[1920px] flex-col overflow-hidden bg-[#f0f0f0] font-['Noto_Sans','Noto_Sans_CJK_SC',sans-serif] text-[15px] leading-none">
      <Top />
      <Ribbon />
      <div className="flex h-[34px] shrink-0 items-center gap-[5px] border-t border-[#ddd] pl-[3px]">
        <Combo t="首层" />
        <Combo t="梁" />
        <Combo t="梁" />
        <Combo t="KL1(3)" />
        <Combo t="分层1" />
      </div>
      <div className="flex h-[774px] shrink-0">
        <Nav />
        <div className="ml-[6px] flex h-full w-[350px] shrink-0 flex-col gap-[6px]">
          <ListPanel />
          <PropPanel />
        </div>
        <div className="w-[5px] shrink-0" />
        <View />
        <div className="w-[4px] shrink-0" />
        <Settings />
      </div>
      <Status />
      <div className="relative flex-1 border-t border-[#b9cdd4] bg-[#cfe8ee]">
        <span className="absolute left-[42px] top-[7px] h-[12px] w-[12px] rounded-full bg-[#d92b2b]" />
        <span className="absolute left-[1158px] top-[5px] h-[5px] w-[49px] rounded-t-[4px] bg-[#e6f2f5]" />
      </div>
    </div>
  );
}
